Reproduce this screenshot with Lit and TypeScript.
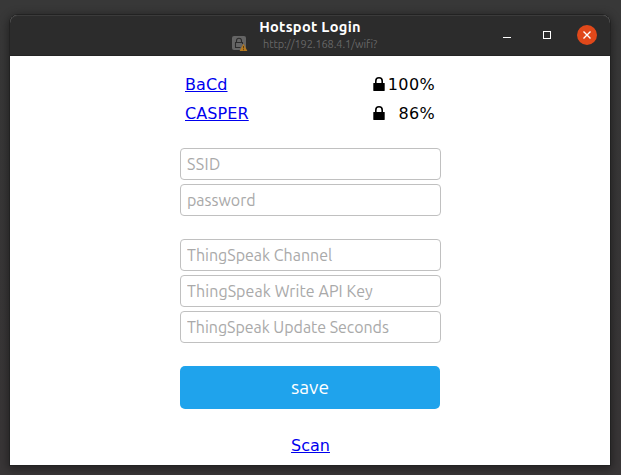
import { LitElement, html, css, svg } from "lit";
import { customElement, property } from "lit/decorators.js";

@customElement("network-row")
class NetworkRow extends LitElement {
  @property() name = "";
  @property() signal = "";

  static styles = css`
    :host {
      display: flex;
      align-items: center;
      height: 29px;
      padding: 0 6px 0 5px;
      font: 16px/29px Verdana, "DejaVu Sans", sans-serif;
    }
    .link {
      flex: 1;
    }
    a {
      color: #0000ee;
      text-decoration: underline;
      letter-spacing: 0.1px;
    }
    .lock {
      width: 12px;
      height: 14px;
      margin-top: -1px;
    }
    .signal {
      width: 50px;
      text-align: right;
      color: #000;
      letter-spacing: 0.35px;
    }
  `;

  render() {
    return html`
      <span class="link"><a href="#">${this.name}</a></span>
      <svg class="lock" viewBox="0 0 12 14">
        <path d="M2.8 7V4a3.2 3.2 0 0 1 6.4 0V7" fill="none" stroke="#000" stroke-width="1.6" />
        <rect x="0.3" y="6" width="11.4" height="8" rx="0.4" />
      </svg>
      <span class="signal">${this.signal}</span>
    `;
  }
}

@customElement("app-root")
class AppRoot extends LitElement {
  static styles = css`
    :host {
      display: block;
      box-sizing: border-box;
      height: 475px;
      padding: 15px 11px 10px 10px;
      overflow: hidden;
      background: linear-gradient(#383838, #393637);
    }
    .window {
      height: 450px;
      display: flex;
      flex-direction: column;
      background: #fff;
      border-radius: 8px 8px 0 0;
      box-shadow: 0 0 0 1px #222, 0 2px 10px 2px rgba(0, 0, 0, 0.4);
    }
    .titlebar {
      box-sizing: border-box;
      height: 41px;
      display: grid;
      grid-template-columns: 120px 1fr 120px;
      background: #2c2c2c;
      border-radius: 8px 8px 0 0;
      box-shadow: inset 0 1px #3b3b3b, inset 0 -1px #242424;
    }
    .heading {
      grid-column: 2;
      padding-top: 3px;
      text-align: center;
      font-family: Ubuntu, "Noto Sans", sans-serif;
    }
    .title {
      height: 18px;
      font-size: 14.6px;
      line-height: 18px;
      font-weight: 700;
      color: #fff;
      letter-spacing: 0.3px;
    }
    .address {
      display: flex;
      align-items: center;
      height: 16px;
      margin-left: 102px;
      font-size: 11px;
      letter-spacing: -0.1px;
      color: #676767;
    }
    .address svg {
      width: 16px;
      height: 16px;
      margin-right: 15px;
    }
    .controls {
      display: flex;
      align-items: center;
      justify-content: flex-end;
      padding-right: 13px;
    }
    .controls svg {
      width: 94px;
      height: 20px;
      margin-top: -1px;
    }
    .page {
      flex: 1;
      display: flex;
      flex-direction: column;
      width: 261px;
      margin-left: 170px;
      padding-top: 14px;
    }
    .group {
      display: flex;
      flex-direction: column;
      gap: 4px;
      margin-top: 20px;
    }
    .group + .group {
      margin-top: 23px;
    }
    input {
      box-sizing: border-box;
      width: 261px;
      height: 32px;
      margin: 0;
      padding: 0 6px;
      border: 1px solid #c0c0c0;
      border-radius: 4px;
      background: #fff;
      font: 16px Ubuntu, "Noto Sans", sans-serif;
    }
    input::placeholder {
      color: #a9a9a9;
      opacity: 1;
    }
    button {
      width: 260px;
      height: 43px;
      margin: 23px 0 0;
      padding: 0 0 2px;
      border: 0;
      border-radius: 5px;
      background: #1fa3ec;
      color: #fff;
      font: 19.2px Ubuntu, "Noto Sans", sans-serif;
    }
    .scan {
      align-self: center;
      margin-top: 22px;
      font: 16px/29px Verdana, "DejaVu Sans", sans-serif;
      color: #0000ee;
    }
    .ssid {
      letter-spacing: 0.4px;
    }
    .key {
      letter-spacing: 0.08px;
    }
    .update {
      letter-spacing: -0.04px;
    }
  `;

  private insecure() {
    return html`<svg viewBox="0 0 16 16">
      ${svg`
        <rect x="0" y="0" width="14" height="14" rx="2" fill="#656565" />
        <path d="M4.5 6.5V4.8a2.5 2.5 0 0 1 5 0v1.7" fill="none" stroke="#2c2c2c" stroke-width="1.1" />
        <path d="M8.5 11.5h-5v-5h7v1.5" fill="none" stroke="#2c2c2c" stroke-width="1.1" />
        <path d="M11.5 7.8L15.4 15H7.6Z" fill="#b5791f" />
        <path d="M11.5 10v2.4M11.5 13.2v1" stroke="#5a3d16" />
      `}
    </svg>`;
  }

  render() {
    return html`
      <div class="window">
        <header class="titlebar">
          <div class="heading">
            <div class="title">Hotspot Login</div>
            <div class="address">${this.insecure()}<span>http://192.168.4.1/wifi?</span></div>
          </div>
          <div class="controls">
            <svg viewBox="0 0 94 20">
              <path d="M0 12.5h8" stroke="#fff" />
              <rect x="40.5" y="6.5" width="7" height="7" fill="none" stroke="#fff" />
              <circle cx="84" cy="10" r="10" fill="#e0481a" />
              <path d="M80.5 6.5l7 7M87.5 6.5l-7 7" stroke="#fff" stroke-width="1.4" />
            </svg>
          </div>
        </header>
        <main class="page">
          <network-row name="BaCd" signal="100%"></network-row>
          <network-row name="CASPER" signal="86%"></network-row>
          <div class="group">
            <input class="ssid" placeholder="SSID" />
            <input placeholder="password" />
          </div>
          <div class="group">
            <input placeholder="ThingSpeak Channel" />
            <input class="key" placeholder="ThingSpeak Write API Key" />
            <input class="update" placeholder="ThingSpeak Update Seconds" />
          </div>
          <button>save</button>
          <a class="scan" href="#">Scan</a>
        </main>
      </div>
    `;
  }
}
